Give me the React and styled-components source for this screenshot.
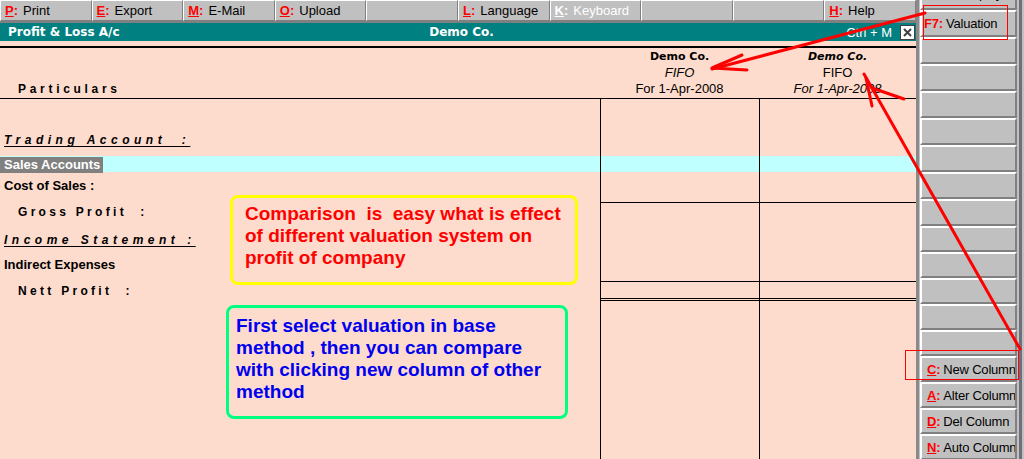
import React from 'react';
import styled, { createGlobalStyle } from 'styled-components';

const GlobalStyle = createGlobalStyle`
  html, body {
    margin: 0;
    padding: 0;
  }
  body {
    width: 1024px;
    height: 459px;
    overflow: hidden;
    background: #c0c0c0;
    font-family: "Liberation Sans", Arial, sans-serif;
  }
`;

const Screen = styled.div`
  position: relative;
  display: flex;
  width: 1024px;
  height: 459px;
  overflow: hidden;
  background: #c0c0c0;
`;

const Main = styled.div`
  width: 916px;
  display: flex;
  flex-direction: column;
`;

const Toolbar = styled.div`
  display: flex;
  height: 21px;
  background: #c0c0c0;
  border-bottom: 2px solid #808080;
`;

const ToolButton = styled.div`
  flex: 1;
  min-width: 0;
  display: flex;
  align-items: center;
  padding-left: 4px;
  border-top: 1px solid #fff;
  border-left: 1px solid #fff;
  border-right: 1px solid #808080;
  border-bottom: 1px solid #808080;
  font-size: 13px;
  color: ${p => (p.$disabled ? '#fff' : '#000')};
  white-space: nowrap;
  overflow: hidden;
`;

const Hot = styled.span`
  color: ${p => (p.$disabled ? '#fff' : '#f00')};
  font-weight: bold;
  margin-right: ${p => p.$gap || 5}px;

  u {
    text-decoration: ${p => (p.$plain ? 'none' : 'underline')};
  }
`;

const TitleBar = styled.div`
  height: 18px;
  background: #008080;
  display: grid;
  grid-template-columns: 1fr auto 1fr;
  align-items: center;
  color: #fff;
  padding: 0 1px 0 8px;
  font-family: "DejaVu Sans", Verdana, sans-serif;
  font-size: 12px;
  font-weight: bold;
`;

const TitleRight = styled.div`
  justify-self: end;
  display: flex;
  align-items: center;
  gap: 8px;
  font-family: "Liberation Sans", Arial, sans-serif;
  font-weight: normal;
  font-size: 13px;
`;

const CloseBox = styled.div`
  width: 13px;
  height: 13px;
  background: #fff;
  border: 1px solid #404040;
  display: flex;
  align-items: center;
  justify-content: center;
`;

const Content = styled.div`
  flex: 1;
  position: relative;
  display: flex;
  flex-direction: column;
  background: #fddccd;
  padding-top: 5px;
`;

const HeaderRow = styled.div`
  display: grid;
  grid-template-columns: 600px 159px 157px;
  height: 50px;
  border-top: 2px solid #000;
  border-bottom: 1px solid #000;
`;

const Particulars = styled.div`
  align-self: end;
  padding: 0 0 1px 18px;
  line-height: 16px;
  font-size: 12px;
  font-weight: bold;
  letter-spacing: 3.7px;
`;

const ColHead = styled.div`
  display: flex;
  flex-direction: column;
  align-items: center;
  padding-top: 1px;
  line-height: 16px;
  font-size: 13px;
`;

const HeadLine = styled.span`
  font-family: ${p => (p.$bold ? '"DejaVu Sans", Verdana, sans-serif' : 'inherit')};
  font-size: ${p => (p.$bold ? '11px' : '13px')};
  font-weight: ${p => (p.$bold ? 'bold' : 'normal')};
  font-style: ${p => (p.$italic ? 'italic' : 'normal')};
`;

const Body = styled.div`
  position: relative;
  flex: 1;
  display: flex;
  flex-direction: column;
`;

const Row = styled.div`
  display: grid;
  grid-template-columns: 600px 159px 157px;
  height: ${p => p.$h}px;
  flex: ${p => (p.$fill ? 1 : 'none')};
  background: ${p => p.$bg || 'transparent'};
`;

const Label = styled.div`
  padding: ${p => p.$top || 0}px 0 0 ${p => p.$left || 4}px;
  line-height: 16px;
  white-space: pre;
`;

const Amount = styled.div`
  border-left: 1px solid #000;
  border-top: ${p => (p.$total ? '1px solid #000' : 'none')};
  border-bottom: ${p => (p.$double ? '3px double #000' : 'none')};
`;

const GroupTitle = styled.span`
  font-size: 12px;
  font-weight: bold;
  font-style: italic;
  letter-spacing: 4.5px;
  text-decoration: underline;
  text-underline-offset: 2px;
`;

const SpacedTotal = styled.span`
  font-size: 12px;
  font-weight: bold;
  letter-spacing: 3.3px;
`;

const Ledger = styled.span`
  font-size: 13px;
  font-weight: bold;
  letter-spacing: 0;
`;

const Selected = styled.span`
  display: inline-block;
  background: #808080;
  color: #fff;
  font-size: 13px;
  font-weight: bold;
  line-height: 16px;
  padding: 0 3px 0 4px;
  margin-left: -4px;
`;

const Note = styled.div`
  position: absolute;
  left: ${p => p.$x}px;
  top: ${p => p.$y}px;
  width: ${p => p.$w}px;
  height: ${p => p.$hh}px;
  box-sizing: border-box;
  border: 3px solid ${p => p.$border};
  border-radius: 8px;
  padding: ${p => p.$pt}px 0 0 ${p => p.$pl}px;
  color: ${p => p.$color};
  font-size: 19px;
  font-weight: bold;
  line-height: 22px;
  white-space: pre;
`;

const NoteLine = styled.div``;

const Sidebar = styled.div`
  width: 97px;
  height: 459px;
  overflow: hidden;
  background: #c0c0c0;
  border-left: 3px solid #8a8a8a;
  border-right: 3px solid #6e6e7c;
  padding: 0 2px 0 1px;
`;

const SideColumn = styled.div`
  margin-top: -17px;
  display: flex;
  flex-direction: column;
`;

const SideButton = styled.div`
  box-sizing: border-box;
  height: ${p => p.$h}px;
  display: flex;
  align-items: center;
  padding: 0 2px 0 ${p => p.$pl || 5}px;
  border-top: 2px solid #fff;
  border-left: 2px solid #fff;
  border-right: 2px solid #808080;
  border-bottom: 2px solid #808080;
  font-size: 13px;
  letter-spacing: -0.2px;
  white-space: nowrap;
  overflow: hidden;
`;

const CutButton = styled(SideButton)`
  align-items: flex-end;
  justify-content: flex-end;
  padding: 0 13px 7px 0;
  line-height: 14px;
`;

const Overlay = styled.svg`
  position: absolute;
  left: 0;
  top: 0;
  pointer-events: none;
`;

const toolItems = [
  { key: 'P', label: 'Print' },
  { key: 'E', label: 'Export' },
  { key: 'M', label: 'E-Mail' },
  { key: 'O', label: 'Upload' },
  null,
  { key: 'L', label: 'Language' },
  { key: 'K', label: 'Keyboard', disabled: true },
  null,
  null,
  { key: 'H', label: 'Help' },
];

const sideItems = [
  { key: 'F7', label: 'Valuation', h: 27, plain: true, pl: 2 },
  { h: 27 }, { h: 27 }, { h: 27 }, { h: 27 }, { h: 27 }, { h: 27 }, { h: 27 },
  { h: 26 }, { h: 26 }, { h: 26 }, { h: 26 }, { h: 26 },
  { key: 'C', label: 'New Column', h: 26 },
  { key: 'A', label: 'Alter Column', h: 26 },
  { key: 'D', label: 'Del Column', h: 26 },
  { key: 'N', label: 'Auto Column', h: 26 },
];

function App() {
  return (
    <Screen>
      <GlobalStyle />
      <Main>
        <Toolbar>
          {toolItems.map((item, i) => (
            <ToolButton key={i} $disabled={item && item.disabled}>
              {item && (
                <>
                  <Hot $disabled={item.disabled}><u>{item.key}</u>:</Hot>
                  {item.label}
                </>
              )}
            </ToolButton>
          ))}
        </Toolbar>

        <TitleBar>
          <span>Profit &amp; Loss A/c</span>
          <span>Demo Co.</span>
          <TitleRight>
            <span>Ctrl + M</span>
            <CloseBox>
              <svg width="9" height="9" viewBox="0 0 9 9">
                <path d="M1 1 L8 8 M8 1 L1 8" stroke="#404040" strokeWidth="2" />
              </svg>
            </CloseBox>
          </TitleRight>
        </TitleBar>

        <Content>
          <HeaderRow>
            <Particulars>Particulars</Particulars>
            <ColHead>
              <HeadLine $bold>Demo Co.</HeadLine>
              <HeadLine $italic>FIFO</HeadLine>
              <HeadLine>For 1-Apr-2008</HeadLine>
            </ColHead>
            <ColHead>
              <HeadLine $bold $italic>Demo Co.</HeadLine>
              <HeadLine>FIFO</HeadLine>
              <HeadLine $italic>For 1-Apr-2008</HeadLine>
            </ColHead>
          </HeaderRow>

          <Body>
            <Row $h={29}><Label /><Amount /><Amount /></Row>
            <Row $h={28}>
              <Label $top={3}><GroupTitle>Trading Account  :</GroupTitle></Label>
              <Amount /><Amount />
            </Row>
            <Row $h={16} $bg="#c0ffff">
              <Label><Selected>Sales Accounts</Selected></Label>
              <Amount /><Amount />
            </Row>
            <Row $h={30}>
              <Label $top={5}><Ledger>Cost of Sales :</Ledger></Label>
              <Amount /><Amount />
            </Row>
            <Row $h={24}>
              <Label $top={1} $left={18}><SpacedTotal>Gross Profit  :</SpacedTotal></Label>
              <Amount $total /><Amount $total />
            </Row>
            <Row $h={30}>
              <Label $top={5}><GroupTitle>Income Statement :</GroupTitle></Label>
              <Amount /><Amount />
            </Row>
            <Row $h={25}>
              <Label $top={0}><Ledger>Indirect Expenses</Ledger></Label>
              <Amount /><Amount />
            </Row>
            <Row $h={20}>
              <Label $top={1} $left={18}><SpacedTotal>Nett Profit  :</SpacedTotal></Label>
              <Amount $total $double /><Amount $total $double />
            </Row>
            <Row $fill><Label /><Amount /><Amount /></Row>

            <Note $x={230} $y={96} $w={348} $hh={90} $border="#ffff00" $color="#ff0000" $pt={5} $pl={12}>
              <NoteLine>Comparison  is  easy what is effect</NoteLine>
              <NoteLine>of different valuation system on</NoteLine>
              <NoteLine>profit of company</NoteLine>
            </Note>
            <Note $x={226} $y={206} $w={342} $hh={114} $border="#00ff80" $color="#0000ee" $pt={7} $pl={7}>
              <NoteLine>First select valuation in base</NoteLine>
              <NoteLine>method , then you can compare</NoteLine>
              <NoteLine>with clicking new column of other</NoteLine>
              <NoteLine>method</NoteLine>
            </Note>
          </Body>
        </Content>
      </Main>

      <Sidebar>
        <SideColumn>
          <CutButton $h={27}>Display</CutButton>
          {sideItems.map((item, i) => (
            <SideButton key={i} $h={item.h} $pl={item.pl}>
              {item.key && (
                <>
                  <Hot $plain={item.plain} $gap={3}><u>{item.key}</u>:</Hot>
                  {item.label}
                </>
              )}
            </SideButton>
          ))}
        </SideColumn>
      </Sidebar>

      <Overlay width="1024" height="459" viewBox="0 0 1024 459">
        <g fill="none" stroke="#ff0000" strokeWidth="3" strokeLinecap="round" strokeLinejoin="round">
          <path d="M925 13 L712 69" />
          <path d="M742 55 L712 68 L747 70" />
          <path d="M1020 349 L864 74" />
          <path d="M872 106 L866 78 M872 88 L904 99" />
        </g>
        <g fill="none" stroke="#ff0000" strokeWidth="1">
          <rect x="923.5" y="5.5" width="84" height="34" />
          <rect x="905.5" y="350.5" width="113" height="29" />
        </g>
      </Overlay>
    </Screen>
  );
}

export default App;
